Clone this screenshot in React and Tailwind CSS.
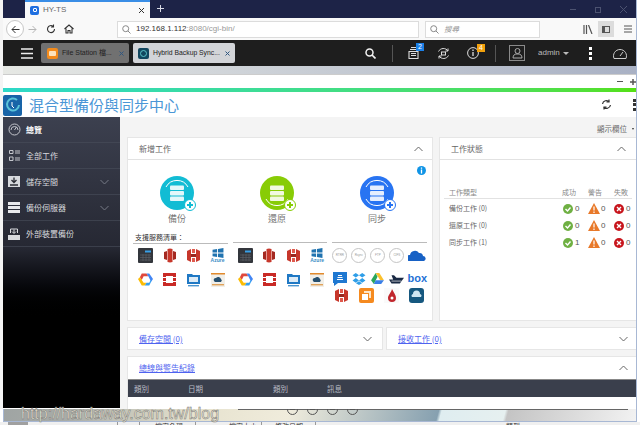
import React from "react";

const latin = "[font-family:'Liberation_Sans',sans-serif]";

function JobIcon({ color, kind, label }) {
  return (
    <div className="flex flex-col items-start">
      <svg width="38" height="36" viewBox="0 0 38 36">
        <circle cx="17" cy="17" r="17" fill={color} />
        <g fill="#fff" fillOpacity="0.88">
          <rect x="10" y="9.500" width="14" height="4.500" rx="1" />
          <rect x="10" y="15" width="14" height="4.500" rx="1" />
          <rect x="10" y="20.500" width="14" height="4.500" rx="1" />
        </g>
        {kind !== "restore" && <path d="M6 11A12.500 12.500 0 0 1 28 11" fill="none" stroke="#fff" strokeWidth="1" />}
        {kind !== "backup" && <path d="M6 23A12.500 12.500 0 0 0 28 23" fill="none" stroke="#fff" strokeWidth="1" />}
        <circle cx="30" cy="29" r="5.500" fill="#fff" stroke={color} strokeWidth="1" />
        <path d="M30 26v6M27 29h6" stroke={color} strokeWidth="2" />
      </svg>
      <span className="w-[34px] text-center text-[9px] leading-[14px] text-[#777]">{label}</span>
    </div>
  );
}

const Nas = () => (
  <svg width="15" height="15" viewBox="0 0 15 15"><rect width="15" height="15" rx="1" fill="#33363c" /><rect x="7" y="2.500" width="6" height="2" fill="#38a0e8" /><path d="M2 7h11M2 9.500h11M2 12h11M5 6v7M8 6v7M11 6v7" stroke="#5b5f66" strokeWidth=".7" /></svg>
);
const Aws = () => (
  <svg width="12" height="15" viewBox="0 0 12 15"><path d="M3.500 1L6 .5v14L3.500 14zM8.500 1L6 .5v14l2.500-.5z" fill="#c7372b" /><path d="M0 4l3-1v9l-3-1zM12 4L9 3v9l3-1z" fill="#a52a22" /></svg>
);
const S3 = () => (
  <svg width="13" height="15" viewBox="0 0 13 15"><path d="M0 3l4-2v13l-4-2zM13 3L9 1v13l4-2z" fill="#c7372b" /><path d="M5 1h3v4H5zM5 10h3v4H5z" fill="#e05a4d" /><path d="M4 6h5v3H4z" fill="#992820" /></svg>
);
const Azure = () => (
  <div className="flex flex-col items-center w-[15px]">
    <svg width="12" height="10" viewBox="0 0 12 11"><path d="M0 2l5-1v4H0zM6 1l6-1v5H6zM0 6h5v4l-5-1zM6 6h6v5l-6-1z" fill="#2073b0" /></svg>
    <span className={`text-[5px] leading-[5px] font-bold text-[#3a8dc5] ${latin}`}>Azure</span>
  </div>
);
const Google = () => (
  <svg width="16" height="15" viewBox="0 0 16 15"><path d="M4 1h5l2 3H6L4 8 2 5z" fill="#e0483c" /><path d="M9 1h3l4 6-2 3-3-6z" fill="#4285f4" /><path d="M14 10l-2 4H7l2-3h3l2-4z" fill="#34a0f0" /><path d="M4 14h3l2-3H6L4 8 2 5 0 7z" fill="#fbbc05" /></svg>
);
const OpenStack = () => (
  <svg width="13" height="13" viewBox="0 0 13 13"><path d="M0 0h13v4h-3V3H3v1H0zM0 9h3v1h7V9h3v4H0zM0 5h3v3H0zM10 5h3v3h-3z" fill="#c92a26" /></svg>
);
const Dav = () => (
  <svg width="13" height="14" viewBox="0 0 13 14"><path d="M0 1h5l1 1h7v9H0z" fill="#1f78c4" /><rect x="2" y="4" width="9" height="5" fill="#fff" opacity=".85" /><rect x="1" y="12" width="11" height="1.400" fill="#4a95d0" /></svg>
);
const Hicloud = () => (
  <svg width="14" height="14" viewBox="0 0 14 14"><rect width="14" height="14" fill="#f1efe9" /><rect width="14" height="1.500" fill="#e28a2c" /><path d="M3 8a2 2 0 0 1 2-3 3 3 0 0 1 5 1 2 2 0 0 1 0 3H4z" fill="#27506f" /><rect x="1" y="11" width="12" height="1.400" fill="#e0a25a" /></svg>
);
const Proto = ({ t }) => (
  <div className={`w-[15px] h-[15px] rounded-full border border-[#c4c4c4] flex items-center justify-center text-[3px] leading-[3px] text-[#999] ${latin}`}>{t}</div>
);
const OneDrive = () => (
  <svg width="18" height="11" viewBox="0 0 18 11"><path d="M1 11a3 3 0 0 1 1-6 5 5 0 0 1 9-2 3.600 3.600 0 0 1 4 3 2.600 2.600 0 0 1 1 5z" fill="#1761c5" /></svg>
);
const BoxCloud = () => (
  <svg width="14" height="14" viewBox="0 0 14 14"><path d="M0 0h14v11H5l-4 3v-3H0z" fill="#1f78d1" /><path d="M5 3h4v1H5zM4.500 5h5v1h-5zM4 7h6v1H4z" fill="#fff" /></svg>
);
const Dropbox = () => (
  <svg width="14" height="12" viewBox="0 0 15 13"><path d="M4 0l3.500 2.500L4 5 .5 2.500zM11 0l3.500 2.500L11 5 7.500 2.500zM4 5.500L7.500 8 4 10.500.5 8zM11 5.500L14.500 8 11 10.500 7.500 8zM4.200 11l3.300-2 3.300 2-3.300 2z" fill="#2f9ee8" /></svg>
);
const Drive = () => (
  <svg width="13" height="11" viewBox="0 0 14 12"><path d="M5 0h4l5 8h-4z" fill="#fbc02d" /><path d="M5 0l2 4-4 8-3-4z" fill="#2aa65a" /><path d="M3 12l2-4h9l-3 4z" fill="#3a7fe8" /></svg>
);
const Ship = () => (
  <svg width="15" height="10" viewBox="0 0 18 11"><path d="M0 6l3 5h10l5-7H9L6 1H3l2 5z" fill="#1a2a44" /><path d="M3 8h12" stroke="#fff" strokeWidth=".8" /></svg>
);
const Box = () => (
  <span className={`text-[11px] leading-[11px] font-bold text-[#1f72d6] ${latin}`}>box</span>
);
const Square = () => (
  <svg width="15" height="15" viewBox="0 0 15 15"><rect width="15" height="15" rx="2" fill="#f58a1f" /><path d="M5 3h7v7h-2V5H5z" fill="#fde6c9" /><rect x="3" y="6" width="6" height="6" fill="#fff" /></svg>
);
const Drop = () => (
  <svg width="15" height="15" viewBox="0 0 15 15"><rect width="15" height="15" fill="#fafafa" /><path d="M8 1c2 4 4 6 4 9a4 4 0 0 1-8 0c0-3 3-5 4-9z" fill="#c1272d" /><circle cx="8" cy="10" r="1.500" fill="#fff" /></svg>
);
const Teal = () => (
  <svg width="15" height="15" viewBox="0 0 15 15"><rect width="15" height="15" rx="3" fill="#16587f" /><path d="M3 9a2 2 0 0 1 1-3 3.500 3.500 0 0 1 7 0 2 2 0 0 1 1 3z" fill="#cfe6f2" /></svg>
);

function Cell({ children }) {
  return <div className="flex items-center justify-center w-full h-[15px]">{children}</div>;
}

function Status({ ok, warn, err }) {
  return (
    <div className={`flex items-center h-[17px] text-[8px] text-[#555] ${latin}`}>
      <svg width="10" height="10" viewBox="0 0 10 10" className="mr-[2px]"><circle cx="5" cy="5" r="5" fill="#6fb043" /><path d="M2.500 5l2 2 3-3.500" fill="none" stroke="#fff" strokeWidth="1.400" /></svg>
      <span className="w-[13px]">{ok}</span>
      <svg width="12" height="11" viewBox="0 0 12 11" className="mr-[1px]"><path d="M6 0l6 11H0z" fill="#e8792a" /><path d="M6 3.500v4M6 8.500v1.500" stroke="#fff" strokeWidth="1.200" /></svg>
      <span className="w-[13px]">{warn}</span>
      <svg width="10" height="10" viewBox="0 0 10 10" className="mr-[2px]"><circle cx="5" cy="5" r="5" fill="#c8161d" /><path d="M3 3l4 4M7 3l-4 4" stroke="#fff" strokeWidth="1.400" /></svg>
      <span>{err}</span>
    </div>
  );
}

const Chevron = ({ up, c = "#666" }) => (
  <svg width="9" height="6" viewBox="0 0 9 6"><path d={up ? "M.5 5L4.500 1l4 4" : "M.5 1l4 4 4-4"} fill="none" stroke={c} strokeWidth="1" /></svg>
);

function SideItem({ icon, label, chev, first }) {
  return (
    <div className="h-[26px] flex items-center pl-[2px] border-b border-[#4a4e5c]/60 text-[#d8dade] text-[8px] shrink-0">
      <div className="w-[18px] flex justify-center">{icon}</div>
      <span className={`ml-[3px] flex-1 ${first ? "font-bold text-white" : ""}`}>{label}</span>
      {chev && <div className="mr-[11px]"><Chevron c="#767a86" /></div>}
    </div>
  );
}

export default function App() {
  return (
    <div className="w-[640px] h-[425px] overflow-hidden relative flex flex-col bg-white [font-family:'Noto_Sans_CJK_TC','Liberation_Sans',sans-serif]">
      <div className="flex h-[409px] shrink-0">
        <div className="w-[3px] bg-[#f4f4f4]" />
        <div className="w-[634px] flex flex-col border-r border-[#a8b8d4] min-w-0">
          {/* title bar */}
          <div className="h-[18px] bg-[#1d2347] flex items-end shrink-0">
            <div className="ml-[22px] w-[125px] h-[18px] bg-[#f9f9f9] flex items-center pl-[5px] border-t-2 border-[#3a8ee6]">
              <div className="w-[9px] h-[9px] rounded-[2px] bg-[#1f6fe0] flex items-center justify-center"><div className="w-[4px] h-[4px] border border-white rounded-[1px]" /></div>
              <span className={`ml-[4px] text-[8px] text-[#666] ${latin}`}>HY-TS</span>
              <svg className="ml-auto mr-[5px]" width="7" height="7" viewBox="0 0 7 7"><path d="M1 1l5 5M6 1L1 6" stroke="#333" strokeWidth="1" /></svg>
            </div>
            <svg className="ml-[6px] mb-[5px]" width="9" height="9" viewBox="0 0 9 9"><path d="M4.500 1v7M1 4.500h7" stroke="#d8dae4" strokeWidth="1" /></svg>
            <div className="ml-auto flex items-center gap-[19px] mr-[9px] mb-[5px]">
              <div className="w-[6px] h-[1px] bg-[#4c5270]" />
              <div className="w-[6px] h-[6px] border border-[#4c5270]" />
              <svg width="7" height="7" viewBox="0 0 7 7"><path d="M0 0l7 7M7 0L0 7" stroke="#4c5270" strokeWidth="1" /></svg>
            </div>
          </div>
          {/* nav row */}
          <div className="h-[22px] bg-[#f9f9f9] flex items-center shrink-0">
            <div className="ml-[3px] w-[18px] h-[18px] rounded-full border border-[#c8c8c8] bg-white flex items-center justify-center">
              <svg width="9" height="9" viewBox="0 0 9 9"><path d="M8.500 4.500H1M4.500 1L1 4.500 4.500 8" fill="none" stroke="#333" strokeWidth="1" /></svg>
            </div>
            <svg className="ml-[4px]" width="9" height="9" viewBox="0 0 9 9"><path d="M.5 4.500H8M4.500 1L8 4.500 4.500 8" fill="none" stroke="#b5b5b5" strokeWidth="1" /></svg>
            <svg className="ml-[9px]" width="10" height="10" viewBox="0 0 10 10"><path d="M8.500 5A3.500 3.500 0 1 1 7 2.200M7.500 .5v2.500H5" fill="none" stroke="#333" strokeWidth="1.100" /></svg>
            <svg className="ml-[8px]" width="10" height="10" viewBox="0 0 10 10"><path d="M.5 5L5 1l4.500 4M2 4.500V9h2V6.500h2V9h2V4.500" fill="none" stroke="#333" strokeWidth="1.100" /></svg>
            <div className="ml-[43px] w-[302px] h-[17px] bg-white border border-[#dcdcdc] flex items-center pl-[4px]">
              <svg width="9" height="9" viewBox="0 0 9 9"><circle cx="3.700" cy="3.700" r="3" fill="none" stroke="#888" /><path d="M6 6l2.500 2.500" stroke="#888" /></svg>
              <span className={`ml-[5px] text-[8px] ${latin}`}>
                <span className="text-[#333]">192.168.1.112</span><span className="text-[#999]">:8080/cgi-bin/</span>
              </span>
            </div>
            <div className="ml-[6px] w-[115px] h-[17px] bg-white border border-[#dcdcdc] flex items-center pl-[4px]">
              <svg width="9" height="9" viewBox="0 0 9 9"><circle cx="3.700" cy="3.700" r="3" fill="none" stroke="#888" /><path d="M6 6l2.500 2.500" stroke="#888" /></svg>
              <span className="ml-[5px] text-[7.500px] italic text-[#999]">搜尋</span>
            </div>
            <svg className="ml-[43px]" width="10" height="9" viewBox="0 0 10 9"><path d="M1 0v9M3.500 0v9M5.500 0l3.500 9" stroke="#555" strokeWidth="1.200" fill="none" /></svg>
            <div className="ml-[5px] w-[16px] h-[16px] bg-[#dcdcdc] flex items-center justify-center"><div className="w-[8px] h-[7px] border border-[#555] border-l-[3px]" /></div>
            <svg className="ml-[10px]" width="8" height="8" viewBox="0 0 8 8"><path d="M0 1h8M0 4h8M0 7h8" stroke="#555" /></svg>
          </div>
          {/* QTS bar */}
          <div className="h-[26px] bg-[#1e1e1e] flex items-center shrink-0">
            <svg className="ml-[18px]" width="12" height="11" viewBox="0 0 12 11"><path d="M0 1h12M0 5.500h12M0 10h12" stroke="#eee" strokeWidth="1.400" /></svg>
            <div className="ml-[8px] w-[88px] h-[20px] rounded-[2px] bg-[#717171] flex items-center pl-[6px]">
              <div className="w-[11px] h-[11px] rounded-[2px] bg-[#f38b1c] flex items-center justify-center"><div className="w-[7px] h-[5px] bg-[#fde3bd] rounded-[1px]" /></div>
              <span className={`ml-[4px] text-[7px] text-[#1f1f1f] ${latin}`}>File Station <span className="[font-family:'Noto_Sans_CJK_TC',sans-serif]">檔</span>...</span>
              <svg className="ml-auto mr-[5px]" width="5" height="5" viewBox="0 0 5 5"><path d="M.5.5l4 4M4.500.5l-4 4" stroke="#2f5680" strokeWidth="1" /></svg>
            </div>
            <div className="ml-[4px] w-[102px] h-[20px] rounded-[2px] bg-[#d2d4d8] flex items-center pl-[5px]">
              <div className="w-[11px] h-[11px] rounded-[2px] bg-[#12475f] flex items-center justify-center"><div className="w-[7px] h-[7px] rounded-full border border-[#5cc3c9]" /></div>
              <span className={`ml-[4px] text-[6.800px] text-[#222] ${latin}`}>Hybrid Backup Sync...</span>
              <svg className="ml-auto mr-[5px]" width="5" height="5" viewBox="0 0 5 5"><path d="M.5.5l4 4M4.500.5l-4 4" stroke="#2f5680" strokeWidth="1" /></svg>
            </div>
            <svg className="ml-[130px]" width="11" height="11" viewBox="0 0 11 11"><circle cx="4.500" cy="4.500" r="3.500" fill="none" stroke="#f2f2f2" strokeWidth="1.500" /><path d="M7 7l3.500 3.500" stroke="#f2f2f2" strokeWidth="1.700" /></svg>
            <div className="ml-[16px] w-[1px] h-[17px] bg-[#555]" />
            <div className="ml-[15px] relative w-[12px] h-[14px]">
              <svg width="12" height="13" viewBox="0 0 12 13"><path d="M1 5.500h9v7H1zM2 3.500h7M3 1.500h5M3 7.500h5M3 9.500h5" fill="none" stroke="#ddd" strokeWidth="1.100" /></svg>
              <span className={`absolute left-[8px] top-[-3px] w-[8px] h-[8px] bg-[#1b80e8] text-white text-[7px] leading-[8px] text-center ${latin}`}>2</span>
            </div>
            <svg className="ml-[17px]" width="13" height="13" viewBox="0 0 13 13"><path d="M1.500 4.500A5.500 5.500 0 0 1 11 4M11.500 8.500A5.500 5.500 0 0 1 2 9M11 1.500V4H8.500M2 11.500V9h2.500" fill="none" stroke="#ddd" /><rect x="4.500" y="5" width="4" height="3" fill="none" stroke="#ddd" /></svg>
            <div className="ml-[17px] relative w-[12px] h-[13px]">
              <svg width="12" height="12" viewBox="0 0 12 12"><circle cx="6" cy="6" r="5.400" fill="none" stroke="#ddd" /><path d="M6 5v4M6 2.500v1.500" stroke="#ddd" strokeWidth="1.300" /></svg>
              <span className={`absolute left-[10px] top-[-3px] w-[8px] h-[8px] bg-[#f2a10c] text-white text-[7px] leading-[8px] text-center ${latin}`}>4</span>
            </div>
            <div className="ml-[16px] w-[1px] h-[17px] bg-[#555]" />
            <div className="ml-[13px] w-[16px] h-[16px] border border-[#8a8a8a] flex items-center justify-center">
              <svg width="11" height="12" viewBox="0 0 11 12"><circle cx="5.500" cy="4" r="2.500" fill="none" stroke="#aaa" /><path d="M1 11c0-3 2-4 3-4h3c1 0 3 1 3 4z" fill="none" stroke="#aaa" /></svg>
            </div>
            <span className={`ml-[13px] text-[8px] text-[#bbb] ${latin}`}>admin</span>
            <div className="ml-[3px] w-0 h-0 border-x-[3px] border-x-transparent border-t-[3px] border-t-[#bbb]" />
            <div className="ml-[20px] flex flex-col gap-[2px]">
              <div className="w-[3px] h-[3px] bg-white" /><div className="w-[3px] h-[3px] bg-white" /><div className="w-[3px] h-[3px] bg-white" />
            </div>
            <svg className="ml-[21px]" width="14" height="11" viewBox="0 0 14 11"><path d="M1 10.500a6.500 6.500 0 1 1 12 0zM7 8l3-4" fill="none" stroke="#ccc" /></svg>
          </div>
          {/* gradient strip */}
          <div className="h-[9px] shrink-0 bg-gradient-to-r from-[#e6e8e4] to-[#a9b1c4] border-b border-[#ccc]" />
          {/* zoom row */}
          <div className="h-[13px] bg-white flex items-center justify-end shrink-0">
            <div className="w-[6px] h-[1.500px] bg-[#555]" />
            <svg className="ml-[7px]" width="6" height="6" viewBox="0 0 6 6"><path d="M3 0v6M0 3h6" stroke="#555" strokeWidth="1.500" /></svg>
          </div>
          <div className="h-[4px] shrink-0 bg-gradient-to-r from-[#2ed8c8] to-[#55e010]" />
          {/* app title */}
          <div className="h-[25px] shrink-0 bg-white flex items-center">
            <svg width="19" height="21" viewBox="0 0 19 21" className="mt-[1px]"><rect width="19" height="21" rx="2" fill="#1864a8" /><path d="M14 5a6 6 0 1 0 2 5" fill="none" stroke="#5ac2d8" strokeWidth="2" /><path d="M9 7v4l2 2" fill="none" stroke="#fff" strokeWidth="1" /></svg>
            <span className="ml-[7px] text-[15px] leading-[15px] text-[#4a96d6]">混合型備份與同步中心</span>
            <svg className="ml-auto mr-[21px]" width="11" height="11" viewBox="0 0 11 11"><path d="M1.500 5a4 4 0 0 1 7-2M9.500 6a4 4 0 0 1-7 2M8 .5V3H5.500M3 10.500V8h2.500" fill="none" stroke="#333" strokeWidth="1.200" /></svg>
            <div className="flex flex-col gap-[1.500px]">
              <div className="w-[3px] h-[3px] bg-[#333]" /><div className="w-[3px] h-[3px] bg-[#333]" /><div className="w-[3px] h-[3px] bg-[#333]" />
            </div>
          </div>
          {/* body */}
          <div className="flex-1 flex min-h-0">
            <aside className="w-[117px] flex flex-col shrink-0 bg-gradient-to-b from-[#3c404f] via-[#262833] via-45% to-black to-70% mb-[1px]">
              <SideItem first label="總覽" icon={<svg width="13" height="13" viewBox="0 0 13 13"><circle cx="6.500" cy="6.500" r="5.500" fill="none" stroke="#c4c6cc" /><path d="M6.500 7l2-3M3 7a3.500 3.500 0 0 1 7 0" fill="none" stroke="#c4c6cc" /></svg>} />
              <SideItem label="全部工作" icon={<svg width="11" height="11" viewBox="0 0 11 11"><path d="M.5.500h3.500v3H.5zM.5 7h3.500v3.500H.5zM6 1h5M6 3h5M6 8h5M6 10h5" fill="none" stroke="#c4c6cc" /></svg>} />
              <SideItem chev label="儲存空間" icon={<svg width="12" height="11" viewBox="0 0 12 11"><path d="M0 0h12v11H0z" fill="#d8dade" /><path d="M6 1.500v4M3.500 4L6 6.500 8.500 4M2 9h8" fill="none" stroke="#2a2c34" strokeWidth="1.300" /></svg>} />
              <SideItem chev label="備份伺服器" icon={<svg width="12" height="11" viewBox="0 0 12 11"><path d="M0 0h12v3H0zM0 4h12v3H0zM0 8h12v3H0z" fill="#e8e9ec" /></svg>} />
              <SideItem label="外部裝置備份" icon={<svg width="12" height="12" viewBox="0 0 12 12"><path d="M2.500 5V1h7v4M6 1.500v3.500M4 3.500L6 5.500 8 3.500" fill="none" stroke="#d8dade" /><path d="M0 7h12v5H0z" fill="#d8dade" /></svg>} />
            </aside>
            <main className="flex-1 min-w-0 bg-[#f4f4f4] pl-[7px] pt-[3px] flex flex-col">
              <div className="h-[17px] flex items-center justify-end pr-[2px] shrink-0">
                <span className="text-[7.500px] text-[#666]">顯示欄位</span>
                <div className="ml-[5px] w-0 h-0 border-x-[1.500px] border-x-transparent border-t-[2px] border-t-[#333]" />
              </div>
              <div className="flex h-[184px] shrink-0 gap-[6px]">
                {/* new job */}
                <section className="w-[306px] bg-white border border-[#e6e6e6] flex flex-col">
                  <div className="h-[22px] pl-[11px] pr-[9px] flex items-center justify-between border-b border-[#e2e2e2] shrink-0">
                    <span className="text-[8px] text-[#666]">新增工作</span>
                    <Chevron up />
                  </div>
                  <div className="flex-1 relative px-[5px]">
                    <svg className="absolute right-[6px] top-[6px]" width="9" height="9" viewBox="0 0 9 9"><circle cx="4.500" cy="4.500" r="4.500" fill="#1094e6" /><path d="M4.500 3.500V7.500M4.500 1.500v1.200" stroke="#fff" strokeWidth="1.300" /></svg>
                    <div className="h-[56px] mt-[16px] flex pl-[27px] gap-[62px]">
                      <JobIcon color="#12bcd4" kind="backup" label="備份" />
                      <JobIcon color="#88cc06" kind="restore" label="還原" />
                      <JobIcon color="#2874f2" kind="sync" label="同步" />
                    </div>
                    <div className="mt-[1px] flex gap-[5px]">
                      <div className="w-[95px]">
                        <div className="text-[7px] leading-[9px] text-[#333] pl-[2px] border-b border-[#bbb] pb-[1px]">支援服務清單：</div>
                        <div className="mt-[4px] grid grid-cols-[repeat(4,15px)] gap-x-[9px] gap-y-[9px] pl-[5px]">
                          <Cell><Nas /></Cell><Cell><Aws /></Cell><Cell><S3 /></Cell><Cell><Azure /></Cell>
                          <Cell><Google /></Cell><Cell><OpenStack /></Cell><Cell><Dav /></Cell><Cell><Hicloud /></Cell>
                        </div>
                      </div>
                      <div className="w-[95px]">
                        <div className="h-[10px] border-b border-[#bbb]" />
                        <div className="mt-[5px] grid grid-cols-[repeat(4,15px)] gap-x-[9px] gap-y-[9px] pl-[5px]">
                          <Cell><Nas /></Cell><Cell><Aws /></Cell><Cell><S3 /></Cell><Cell><Azure /></Cell>
                          <Cell><Google /></Cell><Cell><OpenStack /></Cell><Cell><Dav /></Cell><Cell><Hicloud /></Cell>
                        </div>
                      </div>
                      <div className="w-[95px]">
                        <div className="h-[10px] border-b border-[#bbb]" />
                        <div className="mt-[5px] grid grid-cols-[repeat(4,15px)_18px] gap-x-[4px] gap-y-[8px]">
                          <Proto t="RTRR" /><Proto t="Rsync" /><Proto t="FTP" /><Proto t="CIFS" /><Cell><OneDrive /></Cell>
                          <Cell><BoxCloud /></Cell><Cell><Dropbox /></Cell><Cell><Drive /></Cell><Cell><Ship /></Cell><Cell><Box /></Cell>
                        </div>
                        <div className="mt-[2px] grid grid-cols-[repeat(4,15px)] gap-x-[10px] pl-[2px]">
                          <Cell><S3 /></Cell><Cell><Square /></Cell><Cell><Drop /></Cell><Cell><Teal /></Cell>
                        </div>
                      </div>
                    </div>
                  </div>
                </section>
                {/* job status */}
                <section className="flex-1 bg-white border border-[#e6e6e6] border-r-0 flex flex-col">
                  <div className="h-[22px] pl-[11px] pr-[10px] flex items-center justify-between border-b border-[#e2e2e2] shrink-0">
                    <span className="text-[8px] text-[#666]">工作狀態</span>
                    <Chevron up />
                  </div>
                  <div className="px-[4px] pt-[26px]">
                    <div className="flex h-[13px] items-center text-[7px] text-[#888] border-b border-[#e2e2e2] pl-[5px]">
                      <span className="w-[113px]">工作類型</span>
                      <span className="w-[26px]">成功</span>
                      <span className="w-[26px]">警告</span>
                      <span>失敗</span>
                    </div>
                    <div className="mt-[1px]">
                      {[["備份工作", 0, 0], ["還原工作", 0, 0], ["同步工作", 1, 1]].map(([label, n, ok]) => (
                        <div key={label} className="flex items-center h-[17px] text-[7px] text-[#666] pl-[5px]">
                          <span className="w-[114px]">{label} ({n})</span>
                          <Status ok={ok} warn={0} err={0} />
                        </div>
                      ))}
                    </div>
                  </div>
                </section>
              </div>
              <div className="flex h-[23px] mt-[6px] shrink-0 gap-[3px]">
                <div className="w-[256px] bg-white border border-[#e6e6e6] flex items-center justify-between pl-[11px] pr-[10px]">
                  <span className="text-[8px] text-[#4f63ef] underline">備存空間 (0)</span>
                  <Chevron />
                </div>
                <div className="flex-1 bg-white border border-[#e6e6e6] border-r-0 flex items-center justify-between pl-[11px] pr-[8px]">
                  <span className="text-[8px] text-[#4f63ef] underline">接收工作 (0)</span>
                  <Chevron />
                </div>
              </div>
              <div className="mt-[6px] h-[53px] shrink-0 bg-white border-t border-l border-[#e6e6e6] flex flex-col">
                <div className="h-[22px] flex items-center justify-between pl-[11px] pr-[8px] shrink-0">
                  <span className="text-[8px] text-[#4f63ef] underline">總線與警告紀錄</span>
                  <Chevron up />
                </div>
                <div className="h-[18px] bg-[#3a3f4c] flex items-center text-[7.500px] text-[#b9bcc4] shrink-0 pl-[6px] border-t border-[#888]">
                  <span className="w-[54px]">類別</span>
                  <span className="w-[85px]">日期</span>
                  <span className="w-[54px]">類別</span>
                  <span>訊息</span>
                </div>
              </div>
            </main>
          </div>
        </div>
        <div className="w-[3px] bg-white" />
      </div>
      {/* desktop behind the window */}
      <div className="h-[13px] shrink-0 ml-[3px] w-[634px] flex flex-col overflow-hidden border-x border-b border-[#a8b8d4] bg-[linear-gradient(105deg,#9fa4a3_0%,#a8aca8_10%,#e6e2ce_30%,#f0ecdc_45%,#86a0b0_68.500%,#dfedf0_69%,#e6f0f0_79%,#c4c4c4_79.500%,#f2f2f2_100%)]">
        <div className="ml-[234px] w-[390px] h-[1px] bg-[#666] shrink-0" />
        <div className="ml-[283px] flex gap-[9px] -mt-[7px]">
          {[0, 1, 2, 3].map((i) => (
            <div key={i} className="w-[11px] h-[12px] rounded-full border border-[#555] flex items-center justify-center">
              <div className="w-[5px] h-[1px] bg-[#555]" />
            </div>
          ))}
        </div>
      </div>
      <div className="h-[3px] shrink-0 flex overflow-hidden bg-[#f0f0f0] text-[7px] leading-[8px] text-[#333] whitespace-nowrap">
        <div className="ml-[8px] w-[20px] bg-[#a0a0a0]" />
        <div className="ml-[89px] w-[1px] bg-[#999]" />
        <div className="ml-[21px] w-[1px] bg-[#999]" />
        <span className="ml-[15px] mr-[12px]">檔案名稱</span>
        <div className="w-[1px] bg-[#999]" />
        <span className="ml-[33px] mr-[4px]">檔案大小</span>
        <div className="w-[1px] bg-[#999]" />
        <span className="ml-[13px] mr-[12px]">修改日期</span>
        <div className="w-[1px] bg-[#999]" />
        <span className="ml-[190px]">類型</span>
      </div>
      {/* watermark */}
      <span className={`absolute left-[21px] top-[403px] text-[16px] leading-[22px] text-[#efead6] [-webkit-text-stroke:0.5px_#777] ${latin}`}>http://hardaway.com.tw/blog</span>
    </div>
  );
}
